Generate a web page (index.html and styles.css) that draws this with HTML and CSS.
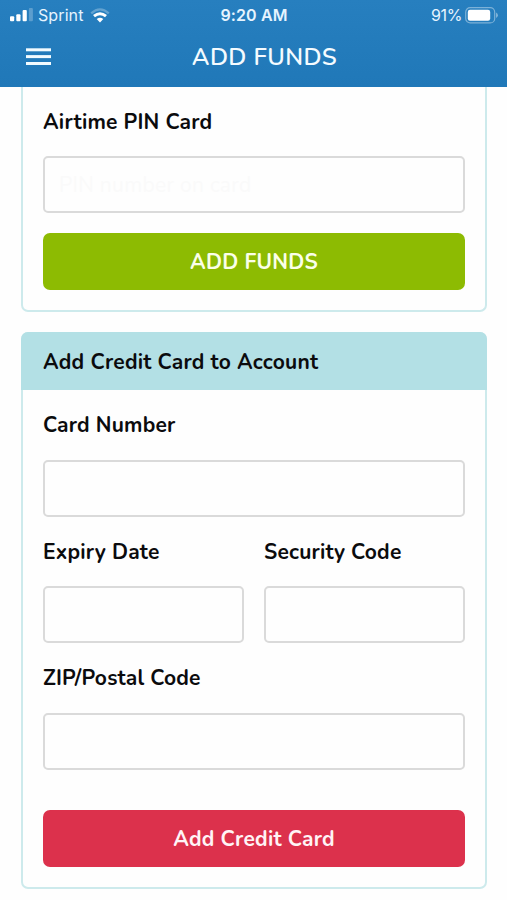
FILE: index.html
```
<!DOCTYPE html>
<html lang="en">
<head>
    <meta charset="UTF-8">
    <meta name="viewport" content="width=device-width, initial-scale=1.0">
    <title>Add Funds</title>
    <link rel="stylesheet" href="styles.css">
</head>
<body>
    <header class="header">
        <div class="status-bar">
            <div class="carrier">
                <svg class="signal" width="23" height="14" viewBox="0 0 23 14" fill="#fff">
                    <rect x="0" y="8.3" width="4.2" height="5" rx="1"/>
                    <rect x="6.3" y="6.2" width="4.2" height="7.1" rx="1"/>
                    <rect x="12.6" y="2" width="4.2" height="11.3" rx="1"/>
                    <rect x="18.9" y="0" width="4" height="13.3" rx="1" opacity=".25"/>
                </svg>
                <span class="carrier-name">Sprint</span>
                <svg class="wifi" width="20" height="15" viewBox="0 0 20 15" fill="none" stroke="#fff">
                    <path d="M1.2 5.3Q10-2.5 18.8 5.3" stroke-width="2.3" opacity=".28"/>
                    <path d="M4 8.2Q10 3.2 16 8.2" stroke-width="3"/>
                    <path d="M6.7 11.1Q10 8.5 13.3 11.1L10 14.5Z" fill="#fff" stroke="none"/>
                </svg>
            </div>
            <span class="time">9:20 AM</span>
            <div class="battery">
                <span class="battery-level">91%</span>
                <svg width="33" height="17" viewBox="0 0 33 17">
                    <rect x=".7" y=".7" width="29" height="15.2" rx="4.5" fill="none" stroke="#fff" stroke-width="1.2" opacity=".4"/>
                    <rect x="2.8" y="2.8" width="22.4" height="11" rx="2.2" fill="#fff"/>
                    <path d="M31 5.5Q33 6.5 33 8.3T31 11Z" fill="#fff" opacity=".4"/>
                </svg>
            </div>
        </div>
        <nav class="nav-bar">
            <svg class="menu-icon" width="25" height="18" viewBox="0 0 25 18" fill="#f2fbff">
                <rect x="0" y=".3" width="25" height="3"/>
                <rect x="0" y="7.1" width="25" height="3"/>
                <rect x="0" y="14" width="25" height="3"/>
            </svg>
            <h1 class="page-title">ADD FUNDS</h1>
        </nav>
    </header>
    <main class="content">
        <form class="card card-pin">
            <label class="label" for="pin">Airtime PIN Card</label>
            <input class="input" type="text" id="pin" placeholder="PIN number on card">
            <button class="button button-green" type="button">ADD FUNDS</button>
        </form>
        <section class="card">
            <h2 class="card-title">Add Credit Card to Account</h2>
            <form class="card-body">
                <div class="field">
                    <label class="label" for="cardNumber">Card Number</label>
                    <input class="input" type="text" id="cardNumber">
                </div>
                <div class="row">
                    <div class="field">
                        <label class="label" for="expiry">Expiry Date</label>
                        <input class="input" type="text" id="expiry">
                    </div>
                    <div class="field">
                        <label class="label" for="security">Security Code</label>
                        <input class="input" type="text" id="security">
                    </div>
                </div>
                <div class="field">
                    <label class="label" for="zip">ZIP/Postal Code</label>
                    <input class="input" type="text" id="zip">
                </div>
                <button class="button button-red" type="button">Add Credit Card</button>
            </form>
        </section>
    </main>
</body>
</html>
```

FILE: styles.css
```
* {
    box-sizing: border-box;
}

body {
    margin: 0;
    font-family: Nunito, Lato, sans-serif;
    color: #0b0b0d;
    background-color: #fefefe;
}

.header {
    height: 87px;
    color: #f4fbff;
    background: linear-gradient(#277fbf, #2078b8);
}

.status-bar {
    display: grid;
    grid-template-columns: 1fr auto 1fr;
    align-items: center;
    height: 30px;
    padding: 0 9px 0 10px;
    font-family: Inter, sans-serif;
    font-size: 16px;
    color: #e6f4ff;
}

.carrier,
.battery {
    display: flex;
    align-items: center;
}

.carrier-name {
    margin: 0 6px 0 5px;
    letter-spacing: 0.1px;
}

.time {
    font-weight: 600;
    letter-spacing: 0.1px;
}

.battery {
    justify-content: flex-end;
    gap: 3px;
}

.battery-level {
    letter-spacing: -0.4px;
}

.nav-bar {
    display: grid;
    grid-template-columns: 25px 1fr;
    align-items: center;
    height: 54px;
    padding: 0 29px 0 26px;
}

.page-title {
    margin: 0;
    font-size: 24px;
    font-weight: 600;
    line-height: 34px;
    text-align: center;
    letter-spacing: 0.4px;
}

.content {
    padding: 0 20px 11px 21px;
}

.card {
    border: 2px solid #cdeaec;
    border-radius: 7px;
}

.card-pin {
    height: 225px;
    margin-bottom: 20px;
    padding: 21px 20px 0;
    border-top: 0;
    border-radius: 0 0 7px 7px;
}

.card-title {
    height: 58px;
    margin: -2px -2px 0;
    padding: 0 22px;
    border-radius: 7px 7px 0 0;
    font-size: 21px;
    line-height: 60px;
    letter-spacing: 0.25px;
    background-color: #b3e0e5;
}

.card-body {
    padding: 21px 20px 20px;
}

.field {
    margin-bottom: 20.75px;
}

.row {
    display: grid;
    grid-template-columns: 1fr 1fr;
    gap: 20px;
}

.label {
    display: block;
    margin-bottom: 20.75px;
    font-size: 21px;
    font-weight: 700;
    line-height: 28px;
    letter-spacing: 0.2px;
}

.card-pin .label {
    margin-bottom: 20px;
}

.input {
    display: block;
    width: 100%;
    height: 57px;
    padding: 0 14px;
    border: 2px solid #dadada;
    border-radius: 5px;
    font-family: inherit;
    font-size: 21px;
    background-color: #fefefe;
}

.input::placeholder {
    color: #fafafa;
    letter-spacing: 0.3px;
}

.button {
    display: block;
    width: 100%;
    height: 57px;
    padding: 0;
    border: 0;
    border-radius: 7px;
    color: #fff4f6;
    font-family: inherit;
    font-size: 21px;
    font-weight: 700;
    letter-spacing: 0.25px;
}

.button-green {
    margin-top: 20px;
    color: #fbffe9;
    background-color: #8dbb02;
}

.button-red {
    margin-top: 40.5px;
    background-color: #dc314c;
}
```
